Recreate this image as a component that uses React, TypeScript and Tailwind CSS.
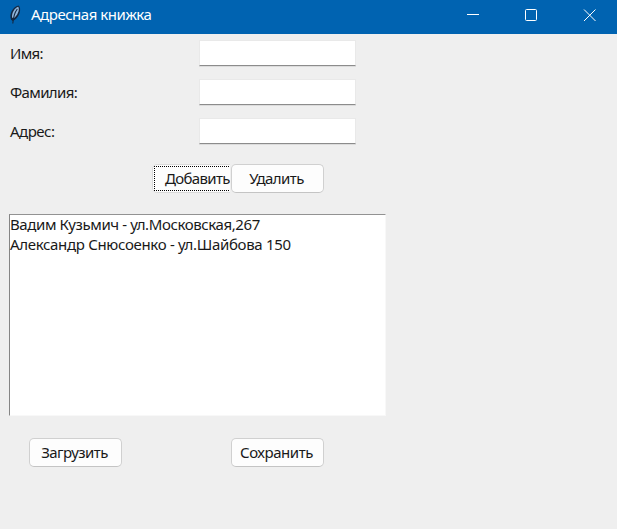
import type { ReactNode } from "react";

const fields = [
  { label: "Имя:", spacing: "tracking-[-0.7px]" },
  { label: "Фамилия:", spacing: "tracking-[-0.65px]" },
  { label: "Адрес:", spacing: "tracking-[-0.5px]" },
];

function Feather() {
  return (
    <svg width="14" height="20" viewBox="0 0 14 20" fill="none">
      <path d="M3 14.5C.8 9.5 4.5 1.5 10.5 .4C14 3.5 11.5 11.5 6.5 15L4.5 16Z" fill="#14263f" />
      <path d="M4 12.5C3.6 8 6.8 2.7 10.2 1.8C12.2 4.5 9.4 10.8 5.6 13.3Z" fill="#8fb4da" />
      <path d="M9.3 4C7 7 5.4 11 4.8 18.5" stroke="#14263f" strokeWidth="1.1" />
    </svg>
  );
}

function Button({ children }: { children: ReactNode }) {
  return (
    <button className="flex h-[29px] w-[93px] items-center justify-center whitespace-nowrap rounded-[5px] border border-[#d0d0d0] border-b-[#c4c4c4] bg-[#fdfdfd] pb-[2px] pr-[2px]">
      {children}
    </button>
  );
}

export default function App() {
  return (
    <main className="flex h-[529px] w-[617px] flex-col overflow-hidden bg-[#efefef] font-['Noto_Sans','Open_Sans',sans-serif] text-[15px] leading-[20px] text-[#191919]">
      <header className="flex h-[34px] shrink-0 items-center bg-[#0063b1] text-white">
        <div className="flex w-[31px] pb-[5px] pl-[8px]"><Feather /></div>
        <h1 className="flex-1 whitespace-nowrap pb-[6px] text-[15px] tracking-[-0.47px]">Адресная книжка</h1>
        <svg className="mb-[4px] mr-[19px]" width="132" height="14" viewBox="0 0 132 14" fill="none" stroke="white">
          <path d="M1 6.5H13" />
          <rect x="59.5" y="1.5" width="11" height="11" rx="1" />
          <path d="M118 1.5L129.5 13M129.5 1.5L118 13" />
        </svg>
      </header>
      <form className="flex flex-col gap-[12px] pl-[10px] pt-[6px]">
        {fields.map(({ label, spacing }) => (
          <label key={label} className="flex h-[27px] items-start">
            <span className={`w-[189px] whitespace-nowrap pt-[3px] ${spacing}`}>{label}</span>
            <input className="h-[26px] w-[157px] border border-[#e9e9e9] border-b-[#8c8c8c] bg-white shadow-[0_1px_0_#dcdcdc] outline-none" />
          </label>
        ))}
      </form>
      <div className="mt-[19px] flex pl-[152px]">
        <div className="w-[79px] pr-px">
          <div className="overflow-hidden">
            <button className="flex h-[29px] w-[93px] items-center rounded-[5px] border border-[#dadada] bg-[#fdfdfd] p-px">
              <span className="flex h-[25px] w-[89px] items-center whitespace-nowrap border border-dotted border-black pb-[2px] pl-[10px] tracking-[-0.65px]">Добавить</span>
            </button>
          </div>
        </div>
        <Button><span className="tracking-[-0.57px]">Удалить</span></Button>
      </div>
      <ul className="ml-[9px] mt-[21px] h-[202px] w-[377px] border border-b-[#f8f8f8] border-l-[#858585] border-r-[#f8f8f8] border-t-[#929292] bg-white">
        <li className="-mt-px h-[20px] whitespace-nowrap tracking-[-0.4px]">Вадим Кузьмич - ул.Московская,267</li>
        <li className="h-[20px] whitespace-nowrap tracking-[-0.32px]">Александр Снюсоенко - ул.Шайбова 150</li>
      </ul>
      <div className="mt-[22px] flex gap-[109px] pl-[29px]">
        <Button><span className="tracking-[-0.55px]">Загрузить</span></Button>
        <Button><span className="tracking-[-0.45px]">Сохранить</span></Button>
      </div>
    </main>
  );
}
